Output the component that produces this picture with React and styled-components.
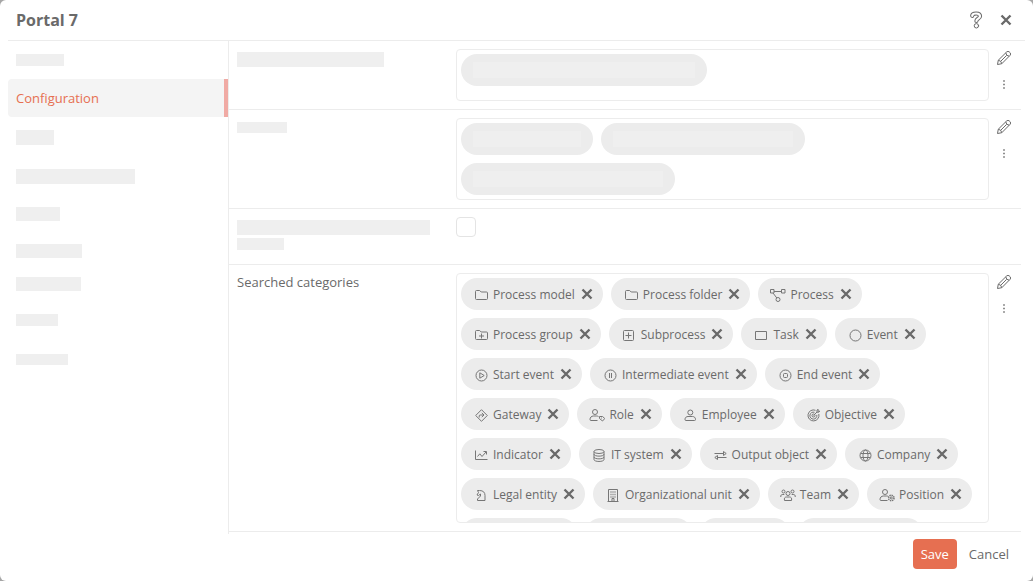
import React from "react";
import styled, { createGlobalStyle } from "styled-components";

const c = {
  text: "#6a6a6a",
  icon: "#767676",
  line: "#ececec",
  chip: "#ececec",
  chipInner: "#efefef",
  bone: "#efefef",
  active: "#f4f4f4",
  accent: "#e66f51",
  marker: "#f0aaa4",
};

const Global = createGlobalStyle`
  *, *::before, *::after { box-sizing: border-box; }
  body {
    margin: 0;
    background: #a6a6a6;
    font-family: "Open Sans", "Noto Sans", sans-serif;
    font-size: 13px;
    line-height: 18px;
    color: ${c.text};
  }
  button { font: inherit; color: inherit; cursor: pointer; }
`;

const Dialog = styled.div`
  display: flex;
  flex-direction: column;
  min-height: 100vh;
  background: #fff;
  border-radius: 6px;
`;

const Header = styled.header`
  display: flex;
  align-items: center;
  justify-content: space-between;
  height: 41px;
  margin: 0 8px;
  padding: 0 8px;
  border-bottom: 1px solid ${c.line};
`;

const Title = styled.h1`
  margin: 0;
  font-size: 16px;
  line-height: 24px;
  font-weight: 700;
`;

const HeaderTools = styled.div`
  display: flex;
  gap: 8px;
`;

const IconButton = styled.button`
  display: flex;
  align-items: center;
  justify-content: center;
  width: ${(p) => p.$size}px;
  height: ${(p) => p.$size}px;
  padding: 0;
  border: 0;
  background: none;
`;

const Body = styled.div`
  display: flex;
  flex: 1;
  padding: 0 12px 0 8px;
`;

const Sidebar = styled.nav`
  flex: none;
  width: 221px;
  border-right: 1px solid ${c.line};
`;

const NavItem = styled.a`
  display: flex;
  align-items: center;
  height: ${(p) => p.$h || 38}px;
  padding: 0 8px;
  color: ${c.accent};
  text-decoration: none;
  border-radius: 4px 0 0 4px;
  background: ${(p) => (p.$active ? c.active : "transparent")};
  box-shadow: ${(p) => (p.$active ? `inset -4px 0 ${c.marker}` : "none")};
`;

const Bone = styled.span`
  display: block;
  width: ${(p) => p.$w}px;
  height: ${(p) => p.$h}px;
  background: ${c.bone};
`;

const Fields = styled.main`
  flex: 1;
  min-width: 0;
`;

const Row = styled.section`
  display: grid;
  grid-template-columns: 219px minmax(0, 1fr) 30px;
  align-items: start;
  min-height: 56px;
  padding: 8px 2px 8px 8px;
  border-bottom: 1px solid ${c.line};
`;

const Label = styled.div`
  display: flex;
  flex-direction: column;
  gap: 3px;
  padding-top: ${(p) => p.$top || 0}px;
`;

const Box = styled.div`
  display: flex;
  flex-wrap: wrap;
  align-content: flex-start;
  gap: 8px;
  height: ${(p) => p.$h}px;
  padding: 4px;
  border: 1px solid ${c.line};
  border-radius: 4px;
  overflow: hidden;
`;

const Actions = styled.div`
  display: flex;
  flex-direction: column;
  align-items: center;
  gap: 8px;
`;

const Chip = styled.span`
  display: flex;
  align-items: center;
  gap: 4px;
  height: 32px;
  padding: 0 8px 0 12px;
  border-radius: 16px;
  background: ${c.chip};
  font-size: 12px;
  white-space: nowrap;
`;

const ChipName = styled.span`
  padding-top: 2px;
`;

const BlankChip = styled(Chip)`
  width: ${(p) => p.$w}px;
  padding: 0 12px;

  &::before {
    content: "";
    flex: 1;
    height: 16px;
    background: ${c.chipInner};
  }
`;

const Check = styled.input`
  appearance: none;
  width: 20px;
  height: 20px;
  margin: 0;
  border: 1px solid #e4e4e4;
  border-radius: 4px;
  background: #fff;
`;

const Footer = styled.footer`
  display: flex;
  justify-content: flex-end;
  gap: 4px;
  padding: 5px 16px 12px;
`;

const Button = styled.button`
  height: 30px;
  padding: 0 8px;
  border: 0;
  border-radius: 4px;
  background: ${(p) => (p.$primary ? c.accent : "transparent")};
  color: ${(p) => (p.$primary ? "#fff" : c.text)};
`;

const Svg = styled.svg`
  display: block;
  flex: none;
  fill: none;
  stroke: ${(p) => (p.$light ? c.icon : c.text)};
  stroke-linejoin: round;
`;

const Cross = () => (
  <Svg width="16" height="16" viewBox="0 0 16 16">
    <path d="M3.5 3.5l9 9M12.5 3.5l-9 9" strokeWidth="2.4" />
  </Svg>
);

const Help = () => (
  <Svg width="16" height="18" viewBox="0 0 16 18" strokeLinecap="round">
    <path d="M4.2 4.8C4.5 1.8 12 1.6 12 5.2C12 7.6 8.4 7.6 8.4 10" strokeWidth="4.2" />
    <path d="M4.2 4.8C4.5 1.8 12 1.6 12 5.2C12 7.6 8.4 7.6 8.4 10" strokeWidth="2.2" stroke="#fff" />
    <circle cx="8.4" cy="14.8" r="2.2" />
  </Svg>
);

const Pencil = () => (
  <Svg width="16" height="16" viewBox="0 0 16 16">
    <path d="M1.5 14.5l.8-4.3L10.6 2a2 2 0 0 1 2.8 0l.6.6a2 2 0 0 1 0 2.8L5.8 13.7z" />
    <path d="M9.8 2.8q.2 3.200 3.400 3.400M2.300 10.200q3 .5 3.500 3.500M4.600 11.400L10.600 5.400" />
  </Svg>
);

const Dots = () => (
  <Svg width="16" height="16" viewBox="0 0 16 16">
    <path d="M7.25 5h1.5M7.25 8.5h1.5M7.25 12h1.5" strokeWidth="1.6" />
  </Svg>
);

const folder = (
  <path d="M2.5 12.5v-7a1 1 0 0 1 1-1h3.2l1.500 1.500h5.300a1 1 0 0 1 1 1v5.500a1 1 0 0 1-1 1h-10a1 1 0 0 1-1-1z" />
);
const ring = <circle cx="8.5" cy="9.5" r="5.5" />;
const person = (
  <>
    <circle cx="6" cy="6" r="2.5" />
    <path d="M8.5 14.5H2a1 1 0 0 1-1-1c0-2 1.3-3.500 3.500-3.500h3c1 0 1.500.2 2 .6" />
  </>
);

const icons = {
  folder,
  process: (
    <>
      <rect x="0.5" y="3.5" width="3.5" height="3.5" />
      <rect x="11.5" y="3.5" width="3.5" height="3.5" />
      <circle cx="8" cy="13.5" r="2" />
      <path d="M4 5.5h7.5M3 7l3.8 5" />
    </>
  ),
  group: (
    <>
      {folder}
      <path d="M8.5 7.5v5M6 10h5" />
    </>
  ),
  subprocess: (
    <>
      <rect x="2.5" y="4.5" width="10" height="10" rx="1" />
      <path d="M7.5 6.5v6M4.5 9.5h6" />
    </>
  ),
  task: <rect x="2.5" y="5.5" width="11" height="8" />,
  event: ring,
  start: (
    <>
      {ring}
      <path d="M6.8 6.8v5.4l4.4-2.7z" />
    </>
  ),
  pause: (
    <>
      {ring}
      <path d="M7.5 7v5M9.5 7v5" />
    </>
  ),
  end: (
    <>
      {ring}
      <rect x="6.5" y="7.5" width="4" height="4" rx="1" />
    </>
  ),
  gateway: (
    <>
      <path d="M8.5 3.7l5.8 5.8-5.8 5.8-5.8-5.8z" />
      <path d="M6.2 11.5V10q0-1 1-1h3.6M8.8 6.9l2.2 2.1-2.2 2.1" />
    </>
  ),
  role: (
    <>
      {person}
      <path d="M10.5 10.5h3l2.300 2-2.300 2.500-3-2.500z" />
      <path d="M12 12h.8" />
    </>
  ),
  employee: (
    <>
      <circle cx="8.3" cy="6.5" r="2.5" />
      <path d="M4 14.5a1 1 0 0 1-1-1c0-2 1.300-3 3-3h4.500c1.700 0 3 1 3 3a1 1 0 0 1-1 1z" />
    </>
  ),
  objective: (
    <>
      <path d="M10.5 4.3a5.5 5.5 0 1 0 3.3 3.7M9.5 6.3a3.5 3.5 0 1 0 2.3 2.6" />
      <circle cx="8.5" cy="9.5" r="1.5" />
      <path d="M8.5 9.5l3.5-3.5V4.2l1-1v2h1.8l-1 1H12" />
    </>
  ),
  indicator: (
    <>
      <path d="M2.5 4.5v9h12" />
      <path d="M4.5 10.5l2.3-2.7 2.2 2.7 4-4.500M10.500 5.500h3v3" />
    </>
  ),
  database: (
    <>
      <ellipse cx="8" cy="5.5" rx="5" ry="2" />
      <path d="M3 5.5v8c0 2.6 10 2.6 10 0v-8M3 8.2c0 2.6 10 2.6 10 0M3 10.9c0 2.6 10 2.6 10 0" />
    </>
  ),
  output: (
    <>
      <path d="M2.5 7.5h9M11.5 5.5l2.7 2-2.7 2z" />
      <path d="M14.5 11.5h-9M5.5 9.5l-2.7 2 2.7 2z" />
    </>
  ),
  globe: (
    <>
      {ring}
      <ellipse cx="8.5" cy="9.5" rx="2.5" ry="5.5" />
      <path d="M3.7 7.5h9.6M3.7 11.5h9.6" />
    </>
  ),
  legal: (
    <path d="M4.5 4.5h2c3.800 0 5.500 2 5.500 5v5H4.500v-1.500l3-3V8l-2 1.500M4.500 4.500l1 2-1.500 2.500 1.500.5" />
  ),
  building: (
    <>
      <path d="M3.5 15V3.5h9V15M2.5 15.5h11M7 15v-2.500h2V15" />
      <path d="M5.5 6h1M7.5 6h1M9.5 6h1M5.5 8.5h1M7.5 8.5h1M9.5 8.5h1M5.5 11h1M7.5 11h1M9.5 11h1" strokeWidth="1.5" />
    </>
  ),
  team: (
    <>
      <circle cx="8" cy="7.5" r="2" />
      <path d="M4.5 14.5c-.6-2.500.5-3.500 2-3.500h3c1.500 0 2.600 1 2 3.500z" />
      <circle cx="3.5" cy="5.5" r="1.5" />
      <circle cx="12.5" cy="5.5" r="1.5" />
      <path d="M.8 11c-.3-2 .7-2.500 2-2.500h1.500M15.200 11c.3-2-.7-2.500-2-2.500h-1.500" />
    </>
  ),
  position: (
    <>
      {person}
      <circle cx="12.3" cy="12" r="2.7" strokeWidth="1.5" strokeDasharray="1.4 0.7" />
      <circle cx="12.3" cy="12" r="1" />
    </>
  ),
};

const categories = [
  ["folder", "Process model"],
  ["folder", "Process folder"],
  ["process", "Process"],
  ["group", "Process group"],
  ["subprocess", "Subprocess"],
  ["task", "Task"],
  ["event", "Event"],
  ["start", "Start event"],
  ["pause", "Intermediate event"],
  ["end", "End event"],
  ["gateway", "Gateway"],
  ["role", "Role"],
  ["employee", "Employee"],
  ["objective", "Objective"],
  ["indicator", "Indicator"],
  ["database", "IT system"],
  ["output", "Output object"],
  ["globe", "Company"],
  ["legal", "Legal entity"],
  ["building", "Organizational unit"],
  ["team", "Team"],
  ["position", "Position"],
];

const navBefore = [[38, 48, 12]];
const navAfter = [
  [40, 38, 15],
  [38, 119, 15],
  [38, 44, 14],
  [36, 66, 14],
  [30, 65, 14],
  [42, 42, 12],
  [36, 52, 11],
];

const NavBones = ({ items }) =>
  items.map(([h, w, b], i) => (
    <NavItem key={i} href="#" $h={h}>
      <Bone $w={w} $h={b} />
    </NavItem>
  ));

const RowActions = () => (
  <Actions>
    <IconButton type="button" aria-label="Edit" $size={18}>
      <Pencil />
    </IconButton>
    <IconButton type="button" aria-label="More" $size={18}>
      <Dots />
    </IconButton>
  </Actions>
);

export default function App() {
  return (
    <>
      <Global />
      <Dialog role="dialog" aria-labelledby="dialog-title">
        <Header>
          <Title id="dialog-title">Portal 7</Title>
          <HeaderTools>
            <IconButton type="button" aria-label="Help" $size={22}>
              <Help />
            </IconButton>
            <IconButton type="button" aria-label="Close" $size={22}>
              <Cross />
            </IconButton>
          </HeaderTools>
        </Header>
        <Body>
          <Sidebar>
            <NavBones items={navBefore} />
            <NavItem href="#" $active aria-current="page">
              Configuration
            </NavItem>
            <NavBones items={navAfter} />
          </Sidebar>
          <Fields>
            <Row>
              <Label $top={3}>
                <Bone $w={147} $h={15} />
              </Label>
              <Box $h={52}>
                <BlankChip $w={246} />
              </Box>
              <RowActions />
            </Row>
            <Row>
              <Label $top={4}>
                <Bone $w={50} $h={11} />
              </Label>
              <Box $h={82}>
                <BlankChip $w={132} />
                <BlankChip $w={204} />
                <BlankChip $w={214} />
              </Box>
              <RowActions />
            </Row>
            <Row>
              <Label $top={3}>
                <Bone $w={193} $h={15} />
                <Bone $w={47} $h={12} />
              </Label>
              <Check type="checkbox" aria-label="Option" />
            </Row>
            <Row>
              <Label>Searched categories</Label>
              <Box $h={250}>
                {categories.map(([icon, name]) => (
                  <Chip key={name}>
                    <Svg $light width="16" height="16" viewBox="0 0 16 16">
                      {icons[icon]}
                    </Svg>
                    <ChipName>{name}</ChipName>
                    <IconButton type="button" aria-label={`Remove ${name}`} $size={16}>
                      <Cross />
                    </IconButton>
                  </Chip>
                ))}
                <BlankChip $w={116} />
                <BlankChip $w={107} />
                <BlankChip $w={90} />
                <BlankChip $w={125} />
              </Box>
              <RowActions />
            </Row>
          </Fields>
        </Body>
        <Footer>
          <Button type="button" $primary>
            Save
          </Button>
          <Button type="button">Cancel</Button>
        </Footer>
      </Dialog>
    </>
  );
}
